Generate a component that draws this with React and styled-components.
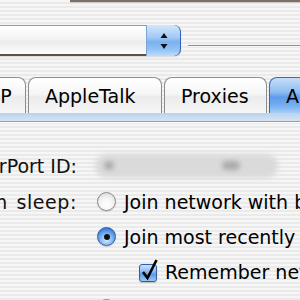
import React from "react";
import styled, { createGlobalStyle } from "styled-components";

const GlobalStyle = createGlobalStyle`
  html, body {
    margin: 0;
    padding: 0;
  }
  body {
    font-family: "DejaVu Sans", "Liberation Sans", sans-serif;
    color: #000;
  }
`;

// Aqua pinstripe window background
const Window = styled.div`
  width: 300px;
  height: 300px;
  overflow: hidden;
  background: repeating-linear-gradient(
    to bottom,
    #f6f6f6 0px,
    #f6f6f6 2px,
    #eaeaea 2px,
    #eaeaea 4px
  );
  font-size: 19px;
`;

const TopEdge = styled.div`
  margin-left: 70px;
  height: 2px;
  background: #7b7068;
  border-bottom: 1px solid #cfcac6;
`;

const ToolRow = styled.div`
  display: flex;
  align-items: flex-start;
  margin-top: 22px;
`;

const Popup = styled.div`
  display: flex;
  margin-left: -40px;
  width: 221px;
  height: 31px;
  box-sizing: border-box;
  border-top: 1px solid #999;
  border-bottom: 2px solid #5c5047;
  border-radius: 0 7px 7px 0;
  box-shadow: 0 1px 1px rgba(0, 0, 0, 0.12);
`;

const PopupBody = styled.div`
  flex: 1;
  background: linear-gradient(
    to bottom,
    #ffffff 0%,
    #f4f4f4 45%,
    #ececec 55%,
    #fbfbfb 100%
  );
`;

const Stepper = styled.div`
  width: 33px;
  display: flex;
  align-items: center;
  justify-content: center;
  border-radius: 0 7px 7px 0;
  border-right: 1px solid #2f62b8;
  border-left: 1px solid #7ea4d6;
  margin-top: -1px;
  margin-bottom: -2px;
  background: linear-gradient(
    to bottom,
    #d3e6fb 0%,
    #a3c9f4 40%,
    #7ab0ef 55%,
    #92c3f5 80%,
    #bcdcfb 100%
  );
`;

const Rule = styled.div`
  flex: 1;
  margin-left: 7px;
  margin-top: 20px;
  height: 1px;
  background: #8b8b8b;
  border-bottom: 1px solid #fafafa;
`;

const TabRow = styled.div`
  display: flex;
  gap: 2px;
  margin-top: 21px;
  margin-left: -64px;
  white-space: nowrap;
`;

const Tab = styled.div`
  flex: none;
  width: ${(p) => p.$width}px;
  height: 36px;
  box-sizing: border-box;
  padding-left: 16px;
  display: flex;
  align-items: center;
  overflow: hidden;
  border: 1px solid ${(p) => (p.$active ? "#3868b8" : "#8d8d8d")};
  border-bottom: none;
  border-radius: 8px 8px 0 0;
  color: #000;
  background: ${(p) =>
    p.$active
      ? "linear-gradient(to bottom, #c6defa 0%, #8fbdf2 40%, #5d9cea 55%, #76b0f0 80%, #a7cff8 100%)"
      : "linear-gradient(to bottom, #ffffff 0%, #f6f6f6 45%, #ebebeb 55%, #f7f7f7 100%)"};
`;

const TabBand = styled.div`
  height: 8px;
  background: linear-gradient(to bottom, #b9d2ef 0%, #d8e4f2 100%);
  border-bottom: 1px solid #9b9b9b;
  box-shadow: 0 1px 0 #ffffff;
`;

const Form = styled.div`
  display: flex;
  flex-direction: column;
  margin-top: 25px;
  white-space: nowrap;
`;

const Row = styled.div`
  display: flex;
  align-items: center;
  height: ${(p) => p.$h || 35}px;
`;

// right-aligned label column; long labels spill out to the left
const Label = styled.div`
  flex: none;
  display: flex;
  justify-content: flex-end;
  width: 137px;
  margin-left: -60px;
  margin-right: 20px;
  color: #111;
  letter-spacing: ${(p) => p.$track || 0}px;
  word-spacing: ${(p) => p.$wordGap || 0}px;
`;

const Field = styled.div`
  display: flex;
  align-items: center;
  justify-content: space-between;
  width: 183px;
  height: 24px;
  margin-left: -2px;
  padding: 0 38px 0 9px;
  box-sizing: border-box;
  border-radius: 12px;
  background: #dadada;
  filter: blur(2.5px);
`;

const Blob = styled.span`
  display: block;
  width: ${(p) => p.$w}px;
  height: 9px;
  border-radius: 5px;
  background: #ababab;
`;

const Option = styled.div`
  display: flex;
  align-items: center;
  gap: 8px;
  margin-left: ${(p) => p.$indent || 0}px;
`;

const Radio = styled.span`
  flex: none;
  width: 19px;
  height: 19px;
  box-sizing: border-box;
  border-radius: 50%;
  display: flex;
  align-items: center;
  justify-content: center;
  border: 1px solid ${(p) => (p.$on ? "#2f5ea8" : "#8a8a8a")};
  background: ${(p) =>
    p.$on
      ? "radial-gradient(circle at 50% 70%, #d6eafe 0%, #84b8f2 40%, #3f7fdc 75%, #2a64c4 100%)"
      : "radial-gradient(circle at 50% 70%, #ffffff 0%, #f4f4f4 45%, #d2d2d2 100%)"};
  box-shadow: 0 1px 1px rgba(0, 0, 0, 0.15);

  &::after {
    content: "";
    display: ${(p) => (p.$on ? "block" : "none")};
    width: 6px;
    height: 6px;
    border-radius: 50%;
    background: #111;
  }
`;

const Check = styled.span`
  flex: none;
  position: relative;
  width: 18px;
  height: 18px;
  margin-top: 2px;
  box-sizing: border-box;
  border-radius: 3px;
  border: 1px solid #2f5ea8;
  background: linear-gradient(
    to bottom,
    #c9e0fb 0%,
    #8ebcf2 40%,
    #5d9cea 60%,
    #9ccaf7 100%
  );
  box-shadow: 0 1px 1px rgba(0, 0, 0, 0.2);

  svg {
    position: absolute;
    left: 1px;
    top: -6px;
    overflow: visible;
  }
`;

const Arrows = () => (
  <svg width="10" height="18" viewBox="0 0 10 18">
    <path d="M5 1 L8.5 6 L1.5 6 Z" fill="#111" />
    <path d="M5 17 L8.5 12 L1.5 12 Z" fill="#111" />
  </svg>
);

const CheckMark = () => (
  <svg width="18" height="22" viewBox="0 0 18 22">
    <path
      d="M2 13 L6.5 19 L15.5 1"
      fill="none"
      stroke="#000"
      strokeWidth="2.6"
      strokeLinejoin="miter"
    />
  </svg>
);

const tabs = [
  { name: "TCP/IP", width: 90 },
  { name: "AppleTalk", width: 134 },
  { name: "Proxies", width: 103 },
  { name: "AirPort", width: 120, active: true },
];

export default function App() {
  return (
    <Window>
      <GlobalStyle />
      <TopEdge />
      <ToolRow>
        <Popup>
          <PopupBody />
          <Stepper>
            <Arrows />
          </Stepper>
        </Popup>
        <Rule />
      </ToolRow>

      <TabRow>
        {tabs.map((t) => (
          <Tab key={t.name} $width={t.width} $active={t.active}>
            {t.name}
          </Tab>
        ))}
      </TabRow>
      <TabBand />

      <Form>
        <Row $h={37}>
          <Label>AirPort ID:</Label>
          <Field>
            <Blob $w={10} />
            <Blob $w={18} />
          </Field>
        </Row>
        <Row>
          <Label $track={0.6} $wordGap={2}>
            When waking from sleep:
          </Label>
          <Option>
            <Radio />
            Join network with best signal
          </Option>
        </Row>
        <Row>
          <Label />
          <Option>
            <Radio $on />
            Join most recently used available network
          </Option>
        </Row>
        <Row>
          <Label />
          <Option $indent={42}>
            <Check>
              <CheckMark />
            </Check>
            Remember network password
          </Option>
        </Row>
        <Row $h={38}>
          <Label />
          <Option>
            <Radio />
            Join a specific network:
          </Option>
        </Row>
      </Form>
    </Window>
  );
}
